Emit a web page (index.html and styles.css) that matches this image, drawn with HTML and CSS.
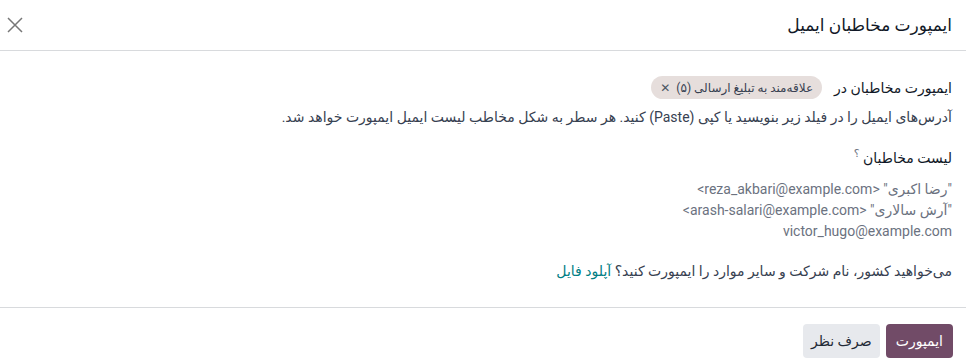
FILE: index.html
```html
<!DOCTYPE html>
<html lang="fa" dir="rtl">
<head>
    <meta charset="UTF-8">
    <title>ایمپورت مخاطبان ایمیل</title>
    <link rel="stylesheet" href="styles.css">
</head>
<body>
    <div class="modal">
        <header class="modal-header">
            <h4 class="modal-title">ایمپورت مخاطبان ایمیل</h4>
            <button class="btn-close" aria-label="بستن">
                <svg width="16" height="16" viewBox="0 0 16 16"><path d="M1 1L15 15M15 1L1 15" stroke="#777" stroke-width="1.5" fill="none"/></svg>
            </button>
        </header>
        <main class="modal-body">
            <div class="list-row">
                <label class="field-label">ایمپورت مخاطبان در</label>
                <span class="tag">علاقه‌مند به تبلیغ ارسالی (۵)<span class="tag-x">✕</span></span>
            </div>
            <p class="hint">آدرس‌های ایمیل را در فیلد زیر بنویسید یا کپی (Paste) کنید. هر سطر به شکل مخاطب لیست ایمیل ایمپورت خواهد شد.</p>
            <label class="field-label contacts-label">لیست مخاطبان <sup>؟</sup></label>
            <div class="contacts">
                <div>"رضا اکبری" &lt;reza_akbari@example.com&gt;</div>
                <div>"آرش سالاری" &lt;arash-salari@example.com&gt;</div>
                <div>victor_hugo@example.com</div>
            </div>
            <p class="more">می‌خواهید کشور، نام شرکت و سایر موارد را ایمپورت کنید؟ <a href="#">آپلود فایل</a></p>
        </main>
        <footer class="modal-footer">
            <button class="btn btn-primary">ایمپورت</button>
            <button class="btn btn-secondary">صرف نظر</button>
        </footer>
    </div>
</body>
</html>
```

FILE: styles.css
```css
body {
    margin: 0;
    background: #fff;
    font-family: Roboto, "DejaVu Sans", "Noto Sans", sans-serif;
    font-size: 14px;
    color: #374151;
}
.modal {
    background: #fff;
}
.modal-header {
    display: flex;
    align-items: center;
    justify-content: space-between;
    height: 50px;
    padding: 0 14px 0 7px;
    border-bottom: 1px solid #d8dadd;
}
.modal-title {
    margin: 0;
    font-size: 17px;
    font-weight: 500;
    color: #111827;
}
.btn-close {
    background: none;
    border: none;
    padding: 0;
    width: 16px;
    height: 16px;
    cursor: pointer;
}
.modal-body {
    padding: 25px 14px 25px;
}
.list-row {
    display: flex;
    align-items: center;
    gap: 12px;
}
.field-label {
    font-weight: 500;
    color: #111827;
}
.tag {
    display: inline-flex;
    align-items: center;
    gap: 6px;
    height: 23px;
    padding: 0 9px;
    border-radius: 12px;
    background: #e6dedc;
    font-size: 12px;
    color: #374151;
}
.tag-x {
    font-size: 12px;
    font-weight: bold;
    color: #4b5563;
}
.hint {
    margin: 8px 0 0;
    line-height: 21px;
}
.contacts-label {
    display: block;
    margin-top: 15px;
    line-height: 21px;
}
.contacts-label sup {
    font-size: 11px;
    color: #6b7280;
}
.contacts {
    margin-top: 10px;
    color: #6b7280;
    line-height: 21px;
}
.more {
    margin: 19px 0 0;
    line-height: 21px;
}
.more a {
    color: #017e84;
    text-decoration: none;
}
.modal-footer {
    display: flex;
    gap: 6px;
    padding: 16px 13px;
    border-top: 1px solid #d8dadd;
}
.btn {
    height: 34px;
    padding: 0 10px;
    border: none;
    border-radius: 4px;
    font-family: inherit;
    font-size: 14px;
    font-weight: 500;
    cursor: pointer;
}
.btn-primary {
    background: #714b67;
    color: #fff;
}
.btn-secondary {
    padding: 0 8px;
    background: #e7e9ed;
    color: #1f2937;
}
```
